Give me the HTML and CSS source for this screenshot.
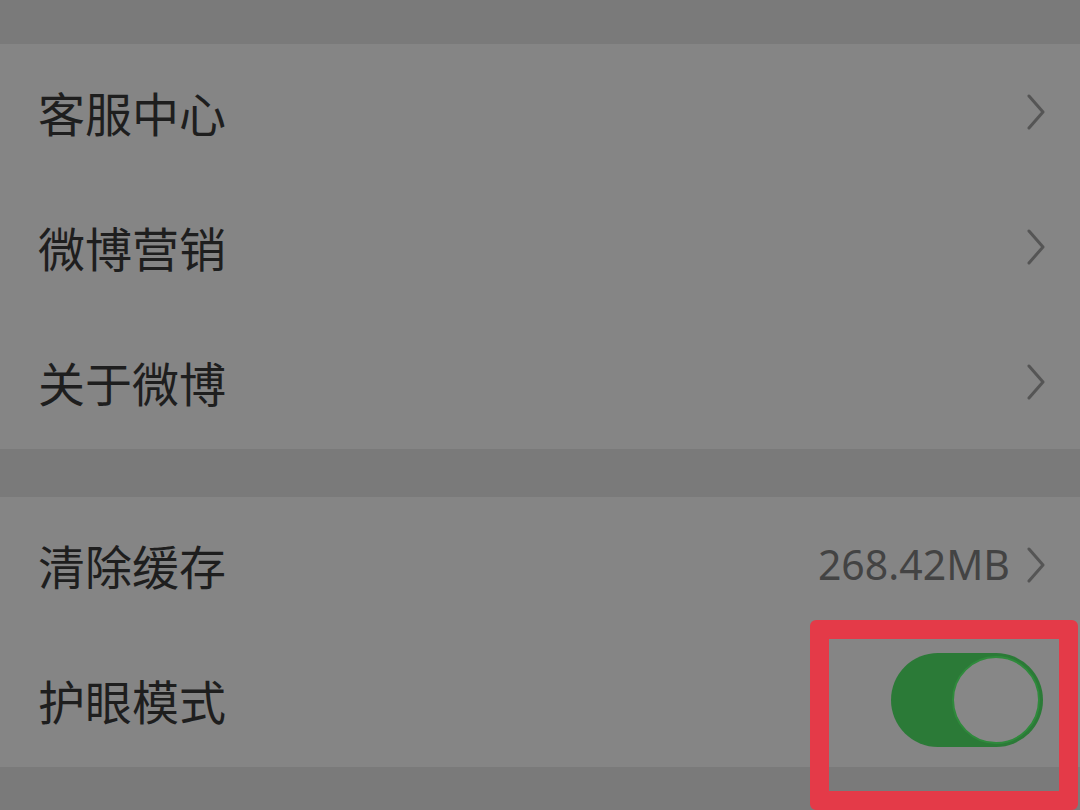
FILE: index.html
```html
<!DOCTYPE html>
<html lang="zh-CN">
<head>
    <meta charset="UTF-8">
    <meta name="viewport" content="width=device-width, initial-scale=1.0">
    <title>设置</title>
    <link rel="stylesheet" href="styles.css">
</head>
<body>

    <div class="page">
        <div class="card first">
            <div class="row">
                <span class="label">客服中心</span>
                <span class="chevron"><svg width="20" height="36" viewBox="0 0 20 36"><path d="M3 2 L17 18 L3 34" fill="none" stroke="#555" stroke-width="3" stroke-linecap="round" stroke-linejoin="round"/></svg></span>
            </div>
            <div class="row">
                <span class="label">微博营销</span>
                <span class="chevron"><svg width="20" height="36" viewBox="0 0 20 36"><path d="M3 2 L17 18 L3 34" fill="none" stroke="#555" stroke-width="3" stroke-linecap="round" stroke-linejoin="round"/></svg></span>
            </div>
            <div class="row">
                <span class="label">关于微博</span>
                <span class="chevron"><svg width="20" height="36" viewBox="0 0 20 36"><path d="M3 2 L17 18 L3 34" fill="none" stroke="#555" stroke-width="3" stroke-linecap="round" stroke-linejoin="round"/></svg></span>
            </div>
        </div>

        <div class="card second">
            <div class="row">
                <span class="label">清除缓存</span>
                <span class="value">268.42MB</span>
                <span class="chevron"><svg width="20" height="36" viewBox="0 0 20 36"><path d="M3 2 L17 18 L3 34" fill="none" stroke="#555" stroke-width="3" stroke-linecap="round" stroke-linejoin="round"/></svg></span>
            </div>
            <div class="row">
                <span class="label">护眼模式</span>
                <span class="switch on"><span class="knob"></span></span>
            </div>
        </div>
    </div>

    <!-- highlight box drawn over the switch -->
    <div class="highlight"></div>

</body>
</html>
```

FILE: styles.css
```css
body {
    margin: 0;
    background-color: #7a7a7a;
    font-family: "Noto Sans CJK SC", "Noto Sans", sans-serif;
    height: 810px;
    overflow: hidden;
    position: relative;
}
.page {
    padding-top: 44px;
}
.card {
    background-color: #858585;
}
.card.second {
    margin-top: 48px;
}
.row {
    height: 135px;
    display: flex;
    align-items: center;
    padding: 0 34px 0 38px;
}
.label {
    flex: 1;
    font-size: 47px;
    color: #1e1e1e;
    line-height: 1;
}
.value {
    font-family: "Noto Sans", sans-serif;
    font-size: 41px;
    color: #434343;
    margin-right: 16px;
    line-height: 1;
}
.chevron {
    display: flex;
    width: 20px;
    height: 36px;
}
.switch {
    width: 152px;
    height: 94px;
    border-radius: 47px;
    background-color: #2b7a37;
    margin-right: 3px;
    display: flex;
    align-items: center;
    justify-content: flex-end;
    padding: 0 3px;
    box-sizing: border-box;
}
.knob {
    width: 88px;
    height: 88px;
    border-radius: 50%;
    background-color: #878787;
    box-sizing: border-box;
    border: 2px solid #2f8a3c;
}
.highlight {
    position: absolute;
    left: 810px;
    top: 620px;
    width: 268px;
    height: 190px;
    box-sizing: border-box;
    border: 19px solid #e43a48;
    border-radius: 6px;
}
```
